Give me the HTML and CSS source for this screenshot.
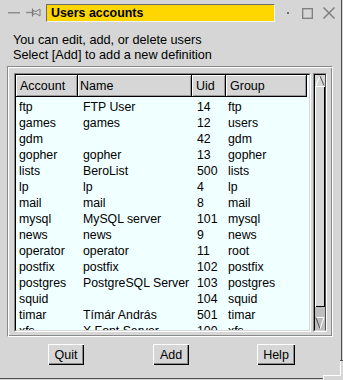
FILE: index.html
```html
<!DOCTYPE html>
<html>
<head>
<meta charset="utf-8">
<title>Users accounts</title>
<link rel="stylesheet" href="styles.css">
</head>
<body>
<div class="window">
  <div class="titlebar">
    <svg class="tb-dash" width="12" height="3" viewBox="0 0 12 3">
      <rect x="0" y="0" width="12" height="1" fill="#8c8c8c"/>
      <rect x="0" y="1" width="12" height="1" fill="#b4b4b4"/>
    </svg>
    <svg class="tb-pin" width="15" height="10" viewBox="0 0 15 10">
      <line x1="0" y1="4.5" x2="6" y2="4.5" stroke="#8c8c8c" stroke-width="1.4"/>
      <line x1="6.5" y1="0.5" x2="6.5" y2="8.5" stroke="#7c7c7c" stroke-width="1.2"/>
      <polygon points="7,2.5 10,3.5 14,1 14,8 10,5.5 7,6.5" fill="none" stroke="#7c7c7c" stroke-width="1"/>
    </svg>
    <div class="title">Users accounts</div>
    <span class="tb-dot"></span>
    <svg class="tb-max" width="11" height="11" viewBox="0 0 11 11">
      <rect x="0.7" y="0.7" width="9.6" height="9.6" fill="none" stroke="#7c7c7c" stroke-width="1.3"/>
    </svg>
    <svg class="tb-close" width="12" height="12" viewBox="0 0 12 12">
      <line x1="0.5" y1="0.5" x2="11.5" y2="11.5" stroke="#7c7c7c" stroke-width="1.4"/>
      <line x1="11.5" y1="0.5" x2="0.5" y2="11.5" stroke="#7c7c7c" stroke-width="1.4"/>
    </svg>
  </div>

  <div class="desc">
    <div>You can edit, add, or delete users</div>
    <div>Select [Add] to add a new definition</div>
  </div>

  <div class="frame">
    <div class="list">
      <div class="list-in">
        <div class="head">
          <div class="hc h1">Account</div>
          <div class="hc h2">Name</div>
          <div class="hc h3">Uid</div>
          <div class="hc h4">Group</div>
        </div>
        <div class="rows">
          <div class="row"><span class="c1">ftp</span><span class="c2">FTP User</span><span class="c3">14</span><span class="c4">ftp</span></div>
          <div class="row"><span class="c1">games</span><span class="c2">games</span><span class="c3">12</span><span class="c4">users</span></div>
          <div class="row"><span class="c1">gdm</span><span class="c2"></span><span class="c3">42</span><span class="c4">gdm</span></div>
          <div class="row"><span class="c1">gopher</span><span class="c2">gopher</span><span class="c3">13</span><span class="c4">gopher</span></div>
          <div class="row"><span class="c1">lists</span><span class="c2">BeroList</span><span class="c3">500</span><span class="c4">lists</span></div>
          <div class="row"><span class="c1">lp</span><span class="c2">lp</span><span class="c3">4</span><span class="c4">lp</span></div>
          <div class="row"><span class="c1">mail</span><span class="c2">mail</span><span class="c3">8</span><span class="c4">mail</span></div>
          <div class="row"><span class="c1">mysql</span><span class="c2">MySQL server</span><span class="c3">101</span><span class="c4">mysql</span></div>
          <div class="row"><span class="c1">news</span><span class="c2">news</span><span class="c3">9</span><span class="c4">news</span></div>
          <div class="row"><span class="c1">operator</span><span class="c2">operator</span><span class="c3">11</span><span class="c4">root</span></div>
          <div class="row"><span class="c1">postfix</span><span class="c2">postfix</span><span class="c3">102</span><span class="c4">postfix</span></div>
          <div class="row"><span class="c1">postgres</span><span class="c2">PostgreSQL Server</span><span class="c3">103</span><span class="c4">postgres</span></div>
          <div class="row"><span class="c1">squid</span><span class="c2"></span><span class="c3">104</span><span class="c4">squid</span></div>
          <div class="row"><span class="c1">timar</span><span class="c2">Tímár András</span><span class="c3">501</span><span class="c4">timar</span></div>
          <div class="row"><span class="c1">xfs</span><span class="c2">X Font Server</span><span class="c3">100</span><span class="c4">xfs</span></div>
        </div>
      </div>
    </div>
    <div class="scroll">
      <div class="scroll-in">
        <div class="sb-up">
          <svg width="10" height="11" viewBox="0 0 10 11">
            <polyline points="1,10.5 5,1" fill="none" stroke="#ffffff" stroke-width="1"/>
            <polyline points="5,1 9,10.5" fill="none" stroke="#505050" stroke-width="1"/>
          </svg>
        </div>
        <div class="sb-thumb"></div>
        <div class="sb-rest">
          <svg width="10" height="13" viewBox="0 0 10 13">
            <line x1="1" y1="0.5" x2="9" y2="0.5" stroke="#ffffff" stroke-width="1"/>
            <polyline points="1,0.5 5,12" fill="none" stroke="#505050" stroke-width="1"/>
            <polyline points="9,0.5 5,12" fill="none" stroke="#ffffff" stroke-width="1"/>
          </svg>
        </div>
      </div>
    </div>
  </div>

  <div class="buttons">
    <button class="btn">Quit</button>
    <button class="btn">Add</button>
    <button class="btn">Help</button>
  </div>
</div>
<svg class="grip" width="21" height="21" viewBox="0 0 21 21">
  <rect x="1" y="1" width="20" height="20" fill="#d6d6d6"/>
  <rect x="18" y="1" width="3" height="1" fill="#505050"/>
  <rect x="18" y="2" width="1" height="14" fill="#ffffff"/>
  <rect x="1" y="16" width="18" height="1" fill="#ffffff"/>
  <rect x="1" y="16" width="1" height="5" fill="#ffffff"/>
</svg>
</body>
</html>
```

FILE: styles.css
```css
* {
  box-sizing: border-box;
}

html,
body {
  margin: 0;
  padding: 0;
}

body {
  width: 343px;
  height: 380px;
  background: #d6d6d6;
  overflow: hidden;
  position: relative;
  font-family: "Liberation Sans", Arial, sans-serif;
  color: #000;
}

.window {
  width: 342px;
  height: 379px;
  border-right: 1px solid #505050;
  border-bottom: 1px solid #505050;
  display: flex;
  flex-direction: column;
}

/* ---------- title bar ---------- */
.titlebar {
  height: 26px;
  display: flex;
  align-items: center;
  padding-left: 8px;
  flex: none;
}

.tb-dash {
  margin-right: 6px;
  margin-top: 0;
}

.tb-pin {
  margin-right: 5px;
}

.title {
  width: 229px;
  height: 18px;
  background: #ffd700;
  border: 1px solid;
  border-color: #6e6e6e #f4f4f4 #f4f4f4 #6e6e6e;
  font-weight: bold;
  font-size: 12.4px;
  padding-left: 4px;
  display: flex;
  align-items: center;
}

.tb-dot {
  width: 2px;
  height: 2px;
  background: #6e6e6e;
  margin-left: 12px;
}

.tb-max {
  margin-left: 13px;
}

.tb-close {
  margin-left: 10px;
}

/* ---------- description ---------- */
.desc {
  margin-top: 7px;
  padding-left: 13px;
  font-size: 12.7px;
  line-height: 15px;
  flex: none;
}

/* ---------- framed list ---------- */
.frame {
  margin: 3px 0 0 7px;
  width: 326px;
  height: 271px;
  border: 1px solid;
  border-color: #8a8a8a #ffffff #ffffff #8a8a8a;
  box-shadow: inset 1px 1px #ffffff, inset -1px -1px #8a8a8a;
  display: flex;
  padding: 6px 5px 4px 6px;
  flex: none;
}

.list {
  width: 297px;
  border: 1px solid;
  border-color: #8a8a8a #ffffff #ffffff #8a8a8a;
}

.list-in {
  height: 100%;
  border: 1px solid;
  border-color: #000000 #d6d6d6 #d6d6d6 #000000;
  background: #f0ffff;
  overflow: hidden;
}

.head {
  display: grid;
  grid-template-columns: 62px 114px 34px 81px;
  height: 22px;
}

.hc {
  background: #d6d6d6;
  border-right: 1px solid #000;
  border-bottom: 1px solid #000;
  box-shadow: inset 1px 1px #ffffff, inset -1px -1px #9a9a9a;
  font-size: 12.5px;
  display: flex;
  align-items: center;
  white-space: nowrap;
}

.h1 { padding-left: 4px; }
.h2 { padding-left: 2px; }
.h3 { padding-left: 4px; }
.h4 { padding-left: 4px; }

.rows {
  padding-top: 2px;
}

.row {
  display: grid;
  grid-template-columns: 62px 114px 34px 81px;
  height: 16px;
  line-height: 16px;
  font-size: 12.3px;
  white-space: nowrap;
}

.row span {
  overflow: visible;
}

.c1 { padding-left: 3px; }
.c2 { padding-left: 5px; }
.c3 { padding-left: 5px; }
.c4 { padding-left: 2px; }

/* ---------- scrollbar ---------- */
.scroll {
  width: 14px;
  margin-left: 2px;
  border: 1px solid;
  border-color: #8a8a8a #ffffff #ffffff #8a8a8a;
  display: flex;
  flex-direction: column;
}

.scroll-in {
  flex: 1;
  border: 1px solid;
  border-color: #000000 #505050 #d6d6d6 #000000;
  display: flex;
  flex-direction: column;
  background: #bdbdbd;
}

.sb-up {
  height: 11px;
  background: #d6d6d6;
  flex: none;
  display: flex;
}

.sb-thumb {
  height: 221px;
  flex: none;
  background: #d6d6d6;
  box-shadow: inset 1px 1px #ffffff, inset -1px -1px #000000;
}

.sb-rest {
  flex: 1;
  display: flex;
  align-items: flex-end;
}

/* ---------- buttons ---------- */
.buttons {
  margin-top: 7px;
  display: grid;
  grid-template-columns: repeat(3, 105px);
  padding-left: 13.5px;
  justify-items: center;
  flex: none;
}

.btn {
  appearance: none;
  margin: 0;
  height: 21px;
  padding: 0 6.5px;
  border: none;
  border-radius: 0;
  background: #d6d6d6;
  font-family: "Liberation Sans", Arial, sans-serif;
  font-size: 12.5px;
  color: #000;
  box-shadow: inset 1px 1px #ffffff, inset -1px -1px #000000, inset -2px -2px #8a8a8a;
}

/* window-manager resize corner drawn over the frame edge */
.grip {
  position: absolute;
  left: 322px;
  top: 359px;
}
```
